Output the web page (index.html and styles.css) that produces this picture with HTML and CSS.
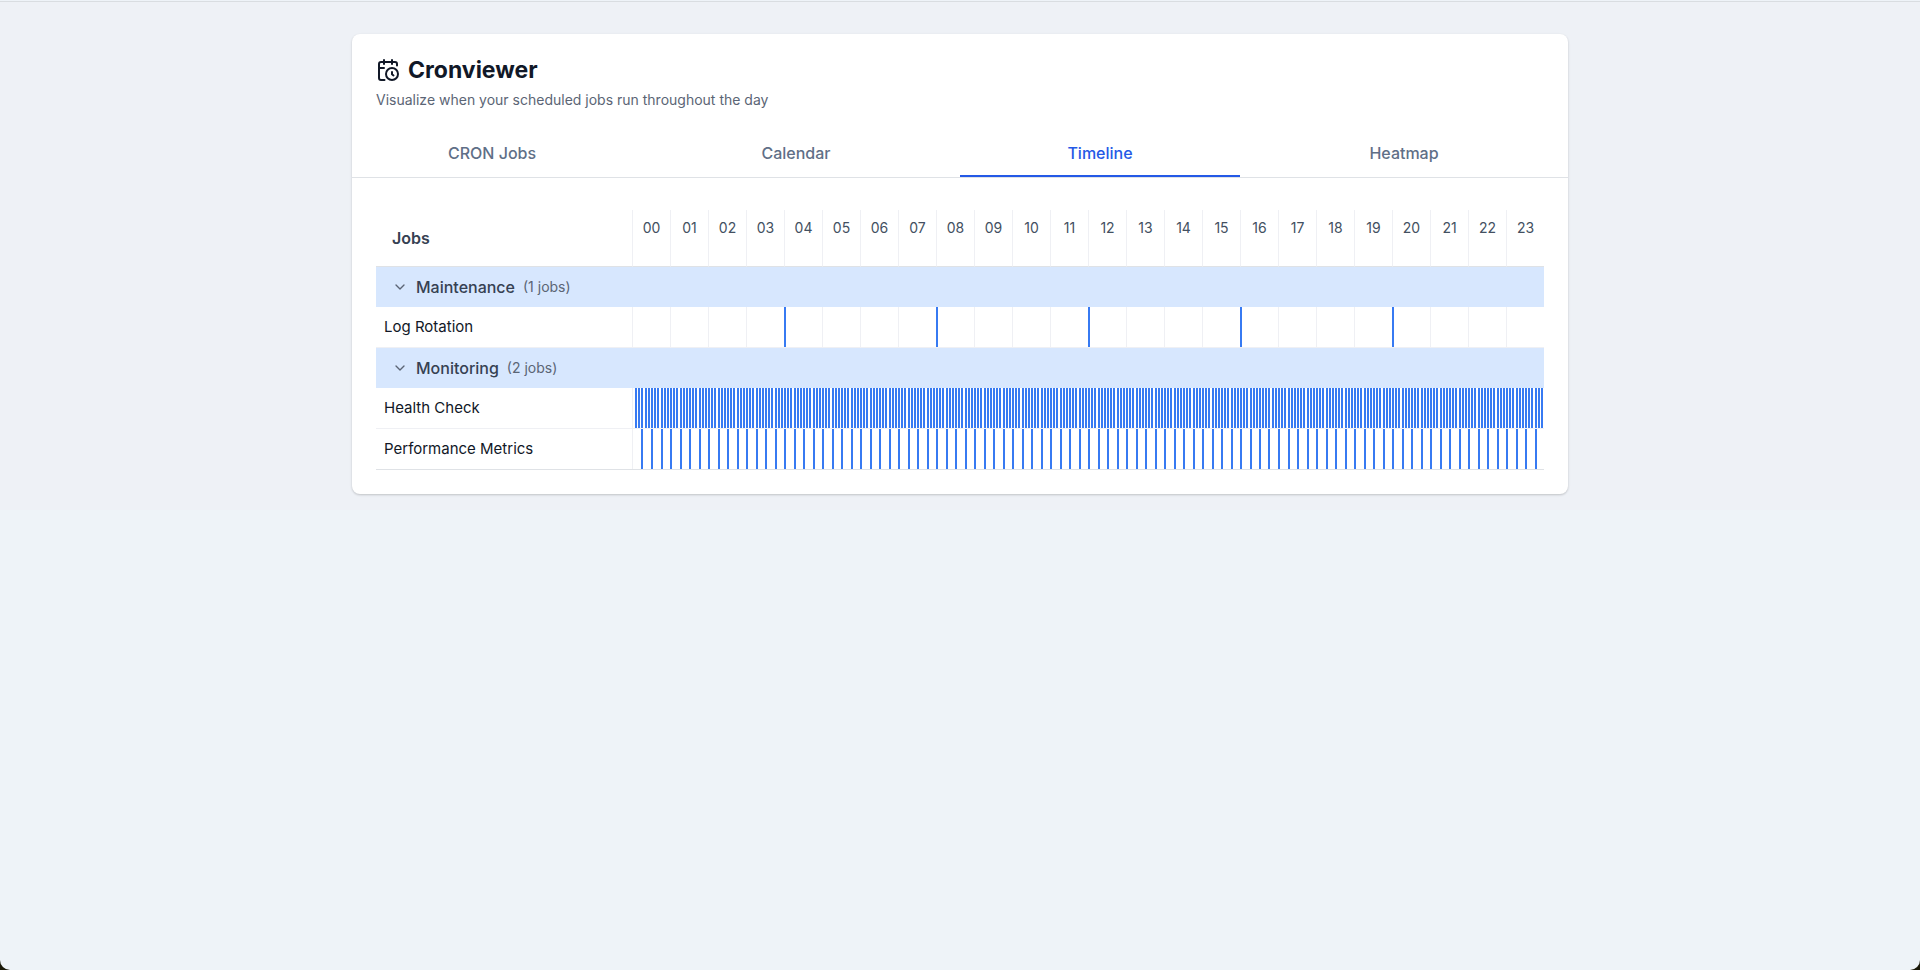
FILE: index.html
```html
<!DOCTYPE html>
<html lang="en">
<head>
<meta charset="utf-8">
<title>Cronviewer</title>
<link rel="stylesheet" href="styles.css">
</head>
<body>
<div class="window">
  <main class="page">
    <section class="card">
      <header class="card-header">
        <h1 class="title">
          <svg class="logo" viewBox="0 0 24 24" aria-hidden="true"><path d="M21 7.5V6a2 2 0 0 0-2-2H5a2 2 0 0 0-2 2v14a2 2 0 0 0 2 2h3.5"/><path d="M16 2v4"/><path d="M8 2v4"/><path d="M3 10h5"/><path d="M17.500 17.500 16 16.300V14"/><circle cx="16" cy="16" r="6"/></svg>
          Cronviewer
        </h1>
        <p class="subtitle">Visualize when your scheduled jobs run throughout the day</p>
      </header>
      <nav class="tabs">
        <button class="tab" type="button">CRON Jobs</button>
        <button class="tab" type="button">Calendar</button>
        <button class="tab tab-active" type="button">Timeline</button>
        <button class="tab" type="button">Heatmap</button>
      </nav>
      <div class="card-body">
        <table class="timeline">
          <colgroup><col class="name-col"><col span="24"></colgroup>
          <thead>
            <tr>
              <th class="jobs-head" scope="col">Jobs</th>
              <th class="hour" scope="col">00</th><th class="hour" scope="col">01</th><th class="hour" scope="col">02</th><th class="hour" scope="col">03</th><th class="hour" scope="col">04</th><th class="hour" scope="col">05</th><th class="hour" scope="col">06</th><th class="hour" scope="col">07</th><th class="hour" scope="col">08</th><th class="hour" scope="col">09</th><th class="hour" scope="col">10</th><th class="hour" scope="col">11</th><th class="hour" scope="col">12</th><th class="hour" scope="col">13</th><th class="hour" scope="col">14</th><th class="hour" scope="col">15</th><th class="hour" scope="col">16</th><th class="hour" scope="col">17</th><th class="hour" scope="col">18</th><th class="hour" scope="col">19</th><th class="hour" scope="col">20</th><th class="hour" scope="col">21</th><th class="hour" scope="col">22</th><th class="hour" scope="col">23</th>
            </tr>
          </thead>
          <tbody>
            <tr>
              <td class="group" colspan="25">
                <button class="group-toggle" type="button" aria-expanded="true">
                  <svg class="chevron" viewBox="0 0 24 24" aria-hidden="true"><path d="m6 9 6 6 6-6"/></svg>
                  <span class="group-name">Maintenance</span>
                  <span class="group-count">(1 jobs)</span>
                </button>
              </td>
            </tr>
            <tr class="job">
              <th class="job-name" scope="row">Log Rotation</th>
              <td class="job-runs" colspan="24"><div class="track" data-every="240"></div></td>
            </tr>
          </tbody>
          <tbody>
            <tr>
              <td class="group" colspan="25">
                <button class="group-toggle" type="button" aria-expanded="true">
                  <svg class="chevron" viewBox="0 0 24 24" aria-hidden="true"><path d="m6 9 6 6 6-6"/></svg>
                  <span class="group-name">Monitoring</span>
                  <span class="group-count">(2 jobs)</span>
                </button>
              </td>
            </tr>
            <tr class="job">
              <th class="job-name" scope="row">Health Check</th>
              <td class="job-runs" colspan="24"><div class="track" data-every="5"></div></td>
            </tr>
            <tr class="job job-last">
              <th class="job-name" scope="row">Performance Metrics</th>
              <td class="job-runs" colspan="24"><div class="track" data-every="15"></div></td>
            </tr>
          </tbody>
        </table>
      </div>
    </section>
  </main>
</div>
<script src="timeline.js"></script>
</body>
</html>
```
FILE: styles.css
```css
* {
  box-sizing: border-box;
}

body {
  margin: 0;
  background: #1a1808;
  font-family: Inter, "Liberation Sans", sans-serif;
  font-size: 16px;
  line-height: 24px;
  color: #111827;
}

.window {
  min-height: 100vh;
  padding-top: 1px;
  background: #eef3f8;
  border-radius: 0 0 10px 10px;
}

.page {
  padding: 32px 16px 16px;
  background: #eef1f6;
  border-top: 1px solid #d9dde1;
}

.card {
  max-width: 1216px;
  margin: 0 auto;
  background: #fff;
  border-radius: 8px;
  box-shadow: 0 1px 3px rgba(0, 0, 0, 0.1), 0 1px 2px rgba(0, 0, 0, 0.1);
}

.card-header {
  padding: 20px 24px;
}

.title {
  display: flex;
  align-items: center;
  gap: 8px;
  margin: 0;
  font-size: 23px;
  font-weight: 700;
  line-height: 32px;
}

.subtitle {
  margin: 4px 0 0;
  font-size: 14px;
  line-height: 20px;
  color: #5b6575;
}

.logo,
.chevron {
  flex: none;
  fill: none;
  stroke: currentColor;
  stroke-width: 2;
  stroke-linecap: round;
  stroke-linejoin: round;
}

.logo {
  width: 24px;
  height: 24px;
}

.tabs {
  display: flex;
  gap: 24px;
  padding-right: 24px;
  border-bottom: 1px solid #dfe2e6;
}

.tab {
  flex: 1;
  padding: 11px 4px 10px;
  background: none;
  border: 0;
  border-bottom: 2px solid transparent;
  font: inherit;
  font-weight: 500;
  color: #5f6f87;
}

.tab-active {
  color: #2459e6;
  border-color: #2459e6;
}

.card-body {
  padding: 32px 24px 24px;
}

.timeline {
  width: 100%;
  table-layout: fixed;
  border-collapse: separate;
  border-spacing: 0;
}

.timeline th,
.timeline td {
  padding: 0;
}

.name-col {
  width: 256px;
}

.timeline thead th {
  height: 57px;
  border-bottom: 1px solid #dfe2e6;
}

.timeline .jobs-head {
  padding-left: 16px;
  text-align: left;
  font-weight: 600;
  color: #364152;
}

.timeline .hour {
  padding-top: 8px;
  vertical-align: top;
  border-left: 1px solid #eff0f4;
  font-size: 14px;
  font-weight: 400;
  line-height: 20px;
  color: #435061;
}

.group {
  background: #d7e7fe;
}

.group-toggle {
  display: flex;
  align-items: center;
  width: 100%;
  height: 40px;
  padding: 0 16px;
  background: none;
  border: 0;
  font: inherit;
  color: #5b6575;
}

.chevron {
  width: 16px;
  height: 16px;
  margin-right: 8px;
}

.group-name {
  margin-right: 8px;
  font-weight: 500;
  color: #364152;
}

.group-count {
  font-size: 14px;
}

.timeline .job-name {
  padding-left: 8px;
  text-align: left;
  font-size: 15px;
  font-weight: 400;
}

.job-name,
.job-runs {
  border-bottom: 1px solid #eff0f4;
}

.job-last .job-name,
.job-last .job-runs {
  border-color: #dfe2e6;
}

.track {
  position: relative;
  height: 40px;
  background: linear-gradient(to right, #eff0f4 1px, transparent 1px) 0 0 / 4.1667% 100%;
}

.run {
  position: absolute;
  top: 0;
  bottom: 0;
  width: 2px;
  background: #377af2;
}
```
FILE: timeline.js
```js
// Adds one bar for each run of a job, placed by its minute of the day.
const MINUTES_PER_DAY = 1440;

document.querySelectorAll(".track").forEach((track) => {
  const every = Number(track.dataset.every);
  for (let minute = every; minute < MINUTES_PER_DAY; minute += every) {
    const run = document.createElement("span");
    run.className = "run";
    run.style.left = (minute / MINUTES_PER_DAY) * 100 + "%";
    track.append(run);
  }
});
```
